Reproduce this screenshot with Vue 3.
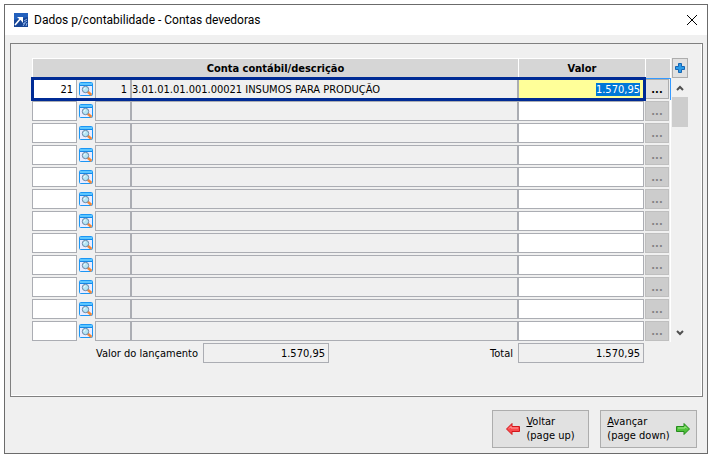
<template>
  <main class="desktop">
    <section class="window" aria-labelledby="window-title">
      <header class="title-bar">
        <svg class="app-logo" viewBox="0 0 14 14" aria-hidden="true">
          <rect width="14" height="14" fill="#174596" />
          <path d="M0 0h14v4L0 7z" fill="#2360bd" />
          <path d="M1 12l6-7" stroke="#fff" stroke-width="1.6" />
          <path d="M3 4h6v6L7 7.500z" fill="#fff" />
          <path d="M10 8l3-2M9 11l4-3M9 13l2-3M12 13l1-3" stroke="#8fb2e6" />
        </svg>
        <h1 id="window-title">Dados p/contabilidade - Contas devedoras</h1>
        <button class="close" type="button" aria-label="Fechar">
          <svg viewBox="0 0 10 10"><path d="M0 0l10 10M10 0L0 10" /></svg>
        </button>
      </header>

      <div class="panel">
        <div class="grid">
          <div class="accounts">
            <table>
              <colgroup>
                <col class="col-code" />
                <col class="col-search" />
                <col class="col-seq" />
                <col />
                <col class="col-value" />
                <col class="col-more" />
              </colgroup>
              <thead>
                <tr>
                  <th colspan="4">Conta contábil/descrição</th>
                  <th>Valor</th>
                  <th></th>
                </tr>
              </thead>
              <tbody>
                <tr v-for="(row, index) in rows" :key="index" :class="{ current: index === 0 }">
                  <td><input v-model="row.code" class="field code" aria-label="Código" /></td>
                  <td>
                    <button class="search" type="button" aria-label="Pesquisar conta">
                      <svg viewBox="0 0 14 14">
                        <rect x="0.5" y="0.5" width="13" height="13" rx="1" fill="#e9ecff" stroke="#1b96f5" />
                        <path d="M1 1h12v2H1z" fill="#5cc6ff" />
                        <path d="M1 3.500h12" stroke="#1487e8" />
                        <path d="M8.500 9.500l4 3.500" stroke="#f0883a" stroke-width="2.400" />
                        <circle cx="6.500" cy="7.500" r="3.200" fill="#b5e6f5" stroke="#6f86a3" />
                        <path d="M5 7.500q0-1.500 1.500-1.500" fill="none" stroke="#fff" />
                      </svg>
                    </button>
                  </td>
                  <td><input :value="row.seq" class="field" aria-label="Sequência" readonly /></td>
                  <td><input :value="row.description" class="field description" aria-label="Descrição" readonly /></td>
                  <td>
                    <input
                      :ref="(el) => { if (index === 0) valueInput = el }"
                      v-model="row.value"
                      class="field value"
                      aria-label="Valor"
                    />
                  </td>
                  <td><button class="more" type="button" :disabled="index !== 0">...</button></td>
                </tr>
              </tbody>
            </table>
          </div>

          <div class="side">
            <button class="add" type="button" aria-label="Adicionar">
              <svg viewBox="0 0 10 10">
                <path d="M3.500 .5h3v3h3v3h-3v3h-3v-3h-3v-3h3z" fill="#2b9be8" stroke="#1465b4" />
              </svg>
            </button>
            <div class="scrollbar">
              <button type="button" aria-label="Rolar para cima">
                <svg viewBox="0 0 8 6"><path d="M1 5l3-3 3 3" /></svg>
              </button>
              <div class="thumb"></div>
              <button class="down" type="button" aria-label="Rolar para baixo">
                <svg viewBox="0 0 8 6"><path d="M1 1l3 3 3-3" /></svg>
              </button>
            </div>
          </div>
        </div>

        <div class="totals">
          <label class="entry-label" for="entry-value">Valor do lançamento</label>
          <input id="entry-value" class="field" :value="total" readonly />
          <label class="total-label" for="total">Total</label>
          <input id="total" class="field" :value="total" readonly />
        </div>
      </div>

      <footer class="actions">
        <button type="button">
          <svg viewBox="0 0 14 12">
            <path d="M.5 6L6 .5V3.500h7.500v5H6v3z" fill="#f9494c" stroke="#d3161b" />
            <path d="M3 5.500l2-2v1.500h7" fill="none" stroke="#ff9c9c" />
          </svg>
          <span><u>V</u>oltar<br />(page up)</span>
        </button>
        <button type="button">
          <span><u>A</u>vançar<br />(page down)</span>
          <svg viewBox="0 0 14 12">
            <path d="M13.500 6L8 .5V3.500H.5v5H8v3z" fill="#4fc23a" stroke="#258b1c" />
            <path d="M2 5h7V3.500l2 2" fill="none" stroke="#a2ec8c" />
          </svg>
        </button>
      </footer>
    </section>
  </main>
</template>

<script setup>
import { ref, onMounted } from 'vue'

const total = '1.570,95'

const rows = ref([
  { code: '21', seq: '1', description: '3.01.01.01.001.00021 INSUMOS PARA PRODUÇÃO', value: total },
  ...Array.from({ length: 11 }, () => ({ code: '', seq: '', description: '', value: '' }))
])

let valueInput = null

onMounted(() => {
  valueInput.focus()
  valueInput.select()
})
</script>

<style>
body {
  margin: 0;
  background: #fff;
}
</style>

<style scoped>
* {
  box-sizing: border-box;
}

.desktop {
  padding: 4px 3px 4px 4px;
  font-family: "DejaVu Sans Condensed", "Noto Sans", sans-serif;
  font-size: 11px;
  color: #000;
}

.window {
  border: 1px solid #6b6b6b;
  background: #f0f0f0;
}

.title-bar {
  display: flex;
  align-items: center;
  height: 30px;
  padding: 0 10px 0 9px;
  background: #fff;
}

.app-logo {
  width: 14px;
  height: 14px;
}

h1 {
  flex: 1;
  margin: 0 0 0 6px;
  font: 12px Roboto, "Noto Sans", sans-serif;
}

button,
input {
  font: inherit;
  color: inherit;
  border-radius: 0;
}

button {
  padding: 0;
  border: 0;
  background: none;
}

svg {
  display: block;
}

.close svg {
  width: 10px;
  height: 10px;
  overflow: visible;
  stroke: #000;
}

.panel {
  margin: 8px 4px 0 5px;
  padding: 14px 14px 33px 21px;
  border: 1px solid #808080;
  box-shadow: inset -1px -1px #fff;
}

.grid {
  display: flex;
  gap: 1px;
}

.accounts {
  flex: 1;
}

table {
  width: 100%;
  table-layout: fixed;
  border-collapse: separate;
  border-spacing: 0;
}

.col-code { width: 47px; }
.col-search { width: 16px; }
.col-seq { width: 36px; }
.col-value { width: 127px; }
.col-more { width: 26px; }

th {
  height: 20px;
  padding: 0;
  background: #d6d6d6;
  border-top: 1px solid #fff;
  border-left: 1px solid #fff;
  font-weight: bold;
  line-height: 18px;
}

th:last-child,
td:last-child {
  border-right: 1px solid #fff;
}

td {
  height: 22px;
  padding: 1px 0;
}

.field {
  display: block;
  width: 100%;
  height: 20px;
  padding: 0 3px;
  border: 1px solid #abadb3;
  background: #fff;
  text-align: right;
  outline: none;
}

.field[readonly] {
  background: #f0f0f0;
}

.code {
  width: 45px;
}

.description.field {
  padding: 0;
  text-align: left;
}

.value {
  width: 126px;
}

.value::selection {
  background: #0078d7;
  color: #fff;
}

.search {
  display: block;
}

.search svg {
  width: 14px;
  height: 14px;
}

.more {
  display: block;
  width: 24px;
  height: 20px;
  border: 1px solid #adadad;
  background: #e1e1e1;
  font-weight: bold;
}

.more:disabled {
  border-color: #bfbfbf;
  background: #ccc;
  color: #838383;
}

.current {
  position: relative;
}

.current .value {
  background: #ffff99;
}

.current td:last-child {
  border-right-color: #3399ff;
  box-shadow: inset 0 1px #3399ff;
}

/* frame around the row being edited */
.current td:first-child::after {
  content: "";
  position: absolute;
  inset: -1px 25px -1px -1px;
  border: 3px solid #002b95;
  pointer-events: none;
}

.side {
  display: flex;
  flex-direction: column;
  width: 16px;
}

.add {
  display: grid;
  place-items: center;
  height: 20px;
  border: 1px solid #adadad;
  background: #e1e1e1;
}

.add svg {
  width: 10px;
  height: 10px;
}

.scrollbar {
  flex: 1;
  display: flex;
  flex-direction: column;
}

.scrollbar button {
  display: grid;
  place-items: center;
  height: 19px;
}

.scrollbar svg {
  width: 8px;
  height: 6px;
  fill: none;
  stroke: #505050;
  stroke-width: 2;
}

.thumb {
  height: 30px;
  background: #cdcdcd;
}

.scrollbar .down {
  margin-top: auto;
}

.totals {
  display: flex;
  align-items: center;
  padding: 1px 44px 0 0;
}

.totals .field {
  width: 126px;
  margin-left: 5px;
}

.entry-label {
  width: 166px;
  text-align: right;
}

.total-label {
  margin-left: auto;
}

.actions {
  display: flex;
  justify-content: flex-end;
  gap: 11px;
  padding: 13px 10px 5px;
}

.actions button {
  display: flex;
  align-items: center;
  justify-content: center;
  gap: 6px;
  width: 97px;
  height: 38px;
  border: 1px solid #adadad;
  background: #e1e1e1;
  text-align: left;
  line-height: 14px;
}

.actions svg {
  width: 14px;
  height: 12px;
}
</style>
